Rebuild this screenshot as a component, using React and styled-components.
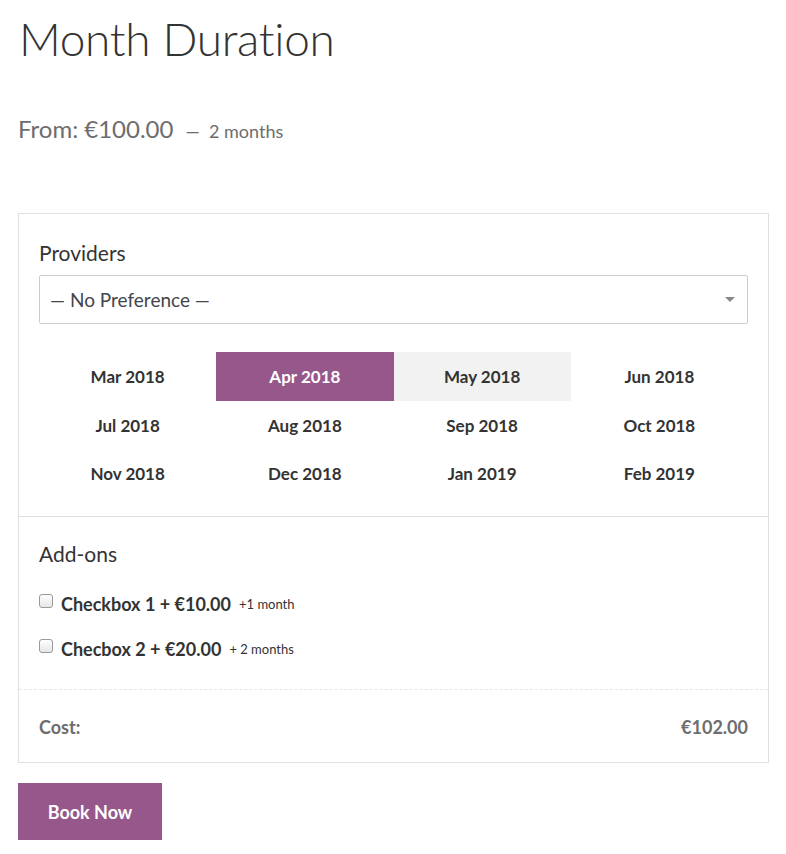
import React from "react";
import styled, { createGlobalStyle } from "styled-components";

const G = createGlobalStyle`
  body { margin: 0; font-family: Lato, "Open Sans", sans-serif; color: #43454b; background: #fff; }
`;
const Page = styled.div`padding: 0 18px 0 18px; width: 751px;`;
const Title = styled.h1`font-weight: 300; font-size: 46px; margin: 10px 0 0 1px; line-height: 58px; color: #333; letter-spacing: -0.3px;`;
const Price = styled.div`margin-top: 46px; display: flex; align-items: baseline; gap: 12px; color: #6d6d6d; font-size: 24px;`;
const Small = styled.span`font-size: 18px;`;
const Box = styled.div`margin-top: 70px; border: 1px solid #e0e0e0;`;
const Section = styled.div`padding: ${p => p.$pad}; border-top: ${p => p.$top || "none"};`;
const Label = styled.div`font-size: 21px; color: #333; margin-bottom: ${p => p.$mb || 10}px;`;
const Select = styled.div`height: 47px; border: 1px solid #ccc; border-radius: 2px; display: flex; align-items: center; justify-content: space-between; padding: 0 12px 0 10px; font-size: 19px; color: #43454b;`;
const Caret = styled.span`width: 0; height: 0; border-left: 5px solid transparent; border-right: 5px solid transparent; border-top: 5px solid #888;`;
const Grid = styled.div`display: grid; grid-template-columns: repeat(4, 1fr); margin-top: 28px;`;
const Cell = styled.div`height: ${p => p.$h}px; display: flex; align-items: center; justify-content: center; font-size: 17px; font-weight: 700; color: ${p => p.$sel ? "#fff" : "#333"}; background: ${p => p.$sel ? "#96588a" : p.$hl ? "#f2f2f2" : "transparent"};`;
const Row = styled.label`display: flex; align-items: center; font-size: 18px; font-weight: 700; color: #333; margin-bottom: 23px;`;
const Box2 = styled.span`width: 12px; height: 12px; border: 1px solid #999; border-radius: 3px; background: linear-gradient(#fff, #e6e6e6); margin-right: 8px; position: relative; top: -3px;`;
const Note = styled.span`font-size: 13px; font-weight: 400; margin-left: 8px;`;
const Cost = styled.div`display: flex; justify-content: space-between; padding: 26px 20px 24px; border-top: 1px dashed #e6e6e6; font-size: 18px; font-weight: 700; color: #6d6d6d;`;
const Button = styled.button`margin-top: 20px; background: #96588a; color: #fff; border: 0; font-family: inherit; font-weight: 700; font-size: 18px; width: 144px; height: 57px;`;

const months = ["Mar 2018","Apr 2018","May 2018","Jun 2018","Jul 2018","Aug 2018","Sep 2018","Oct 2018","Nov 2018","Dec 2018","Jan 2019","Feb 2019"];

export default function App() {
  return (
    <Page>
      <G />
      <Title>Month Duration</Title>
      <Price>From: €100.00 <Small>—&nbsp; 2 months</Small></Price>
      <Box>
        <Section $pad="26px 20px 19px">
          <Label>Providers</Label>
          <Select>— No Preference —<Caret /></Select>
          <Grid>
            {months.map((m, i) => <Cell key={m} $h={i < 4 ? 49 : 48} $sel={i === 1} $hl={i === 2}>{m}</Cell>)}
          </Grid>
        </Section>
        <Section $pad="24px 20px 6px" $top="1px solid #e0e0e0">
          <Label $mb={27}>Add-ons</Label>
          <Row><Box2 />Checkbox 1 + €10.00<Note>+1 month</Note></Row>
          <Row><Box2 />Checbox 2 + €20.00<Note>+ 2 months</Note></Row>
        </Section>
        <Cost><span>Cost:</span><span>€102.00</span></Cost>
      </Box>
      <Button>Book Now</Button>
    </Page>
  );
}
